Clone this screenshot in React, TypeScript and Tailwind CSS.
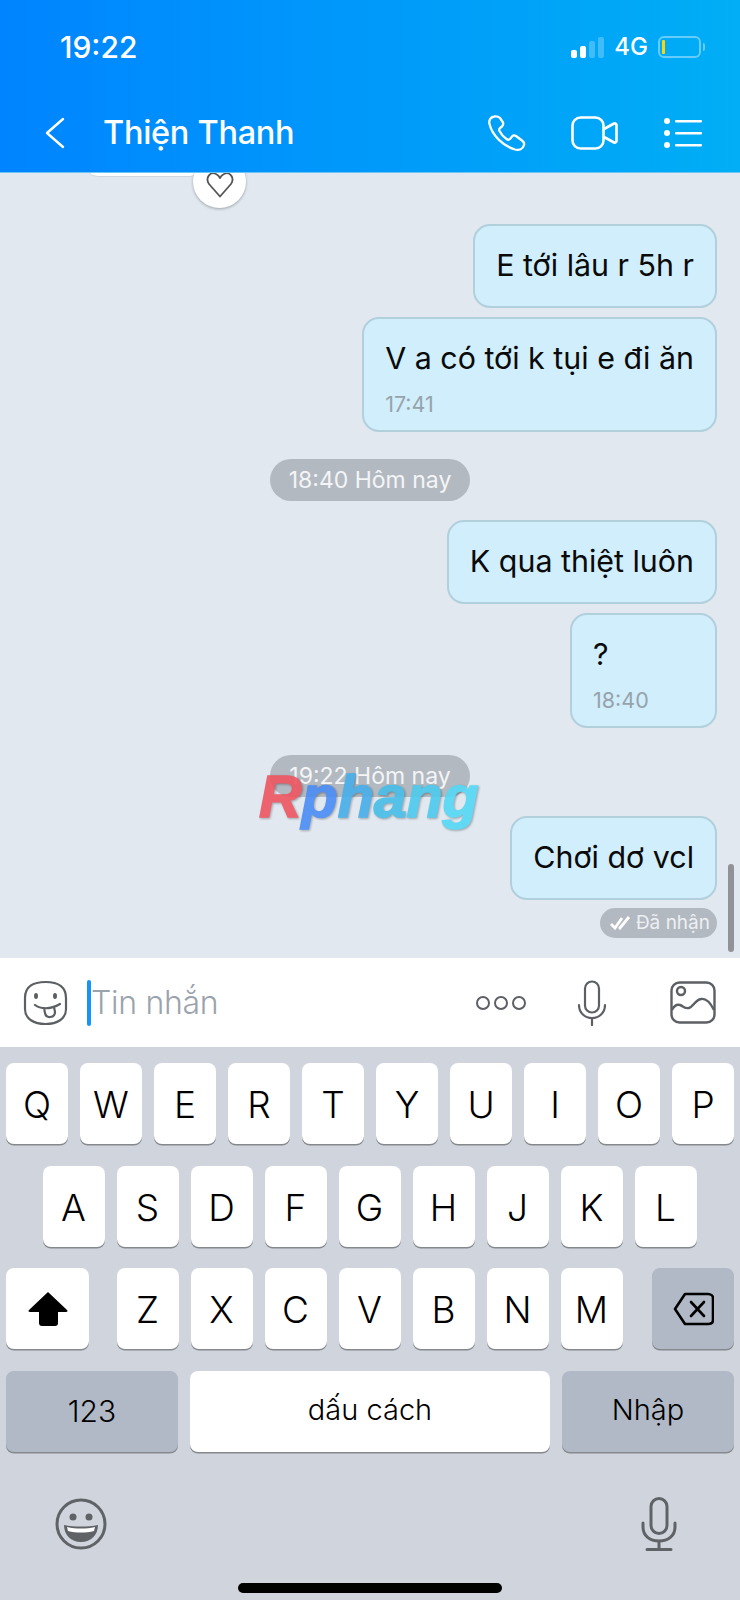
const font = { fontFamily: "Inter, 'Noto Sans', sans-serif" };

const row1 = ["Q", "W", "E", "R", "T", "Y", "U", "I", "O", "P"];
const row2 = ["A", "S", "D", "F", "G", "H", "J", "K", "L"];
const row3 = ["Z", "X", "C", "V", "B", "N", "M"];

function Key({ label }: { label: string }) {
  return (
    <div className="flex h-[81px] w-[62px] items-center justify-center rounded-[8px] bg-white pt-[2px] text-[37px] leading-none font-light text-black shadow-[0_1.5px_0_#85888d]">
      {label}
    </div>
  );
}

function Bubble({ text, time }: { text: string; time?: string }) {
  return (
    <div className={`rounded-[17px] border-2 border-[#b2cfdc] bg-[#d0eefc] px-[21px] pt-[19px] ${time ? "pb-[14px]" : "pb-[20px]"}`}>
      <div className="text-[30.4px] leading-[41px] whitespace-nowrap text-[#0a0a0a]">{text}</div>
      {time && <div className="mt-[13px] text-[21.5px] leading-[24px] text-[#97a3ab]">{time}</div>}
    </div>
  );
}

function TimePill({ text }: { text: string }) {
  return (
    <div className="flex h-[42px] w-[200px] items-center justify-center self-center rounded-full bg-[#b3b9c1] text-[23px] text-[#f3f5f7]">
      {text}
    </div>
  );
}

function StatusBar() {
  return (
    <div className="flex h-[94px] items-center pr-[35px] pl-[60px] text-white">
      <span className="text-[30px] font-medium">19:22</span>
      <div className="ml-auto flex items-center">
        <div className="flex h-[21px] items-end gap-[3px]">
          <span className="h-[8px] w-[6px] rounded-[2px] bg-white" />
          <span className="h-[12px] w-[6px] rounded-[2px] bg-white" />
          <span className="h-[17px] w-[6px] rounded-[2px] bg-white/25" />
          <span className="h-[21px] w-[6px] rounded-[2px] bg-white/25" />
        </div>
        <span className="ml-[10px] text-[24px] font-medium">4G</span>
        <div className="ml-[10px] flex h-[22px] w-[43px] items-center rounded-[6px] border-2 border-white/40 pl-[2px]">
          <span className="h-[14px] w-[3px] rounded-[1px] bg-[#ffd60a]" />
        </div>
        <span className="ml-[2px] h-[8px] w-[2px] rounded-r-full bg-white/40" />
      </div>
    </div>
  );
}

function NavBar() {
  return (
    <div className="flex h-[78px] items-center text-white">
      <svg className="ml-[45px] h-[32px] w-[20px]" viewBox="0 0 20 32" fill="none" stroke="currentColor" strokeWidth="2.4" strokeLinecap="round" strokeLinejoin="round">
        <path d="M18 2 2 16l16 14" />
      </svg>
      <span className="ml-[38px] text-[32.5px] font-medium tracking-[-0.3px]">Thiện Thanh</span>
      <div className="ml-auto flex items-center pr-[38px]">
        <svg className="h-[36px] w-[38px]" viewBox="0 0 38 36" fill="none" stroke="currentColor" strokeWidth="2.300" strokeLinejoin="round">
          <path d="M6 1.500C3 2 .5 5 1.500 9 4 20 15 31 27 34.500c4 1 8-.5 9-4.500.5-2 0-3-2-4.500L28 21c-1.500-1-3-1-4 .5L22 24c-1 1-2 1-3.500 0-3.500-2.500-5.500-5-7-8-.5-1-.5-2 .5-3l2-1.500c1.500-1.500 1.500-2.500 1-4L12 3c-1.500-1.500-3.500-2-6-1.500Z" />
        </svg>
        <svg className="ml-[45px] h-[34px] w-[47px]" viewBox="0 0 47 34" fill="none" stroke="currentColor" strokeWidth="2.600" strokeLinejoin="round">
          <rect x="1.5" y="1.5" width="31" height="31" rx="8" />
          <path d="M33 13 43 7.500c1.500-.5 2.500.5 2.500 1.500v16c0 1-1 2-2.500 1.500L33 21" />
        </svg>
        <svg className="ml-[46px] h-[30px] w-[38px]" viewBox="0 0 38 30" fill="currentColor">
          <circle cx="3" cy="3" r="3" />
          <circle cx="3" cy="15" r="3" />
          <circle cx="3" cy="27" r="3" />
          <rect x="11" y="2" width="27" height="2.400" rx="1" />
          <rect x="11" y="14" width="27" height="2.400" rx="1" />
          <rect x="11" y="26" width="27" height="2.400" rx="1" />
        </svg>
      </div>
    </div>
  );
}

function ChatArea() {
  return (
    <div className="relative flex h-[786px] flex-col items-end overflow-hidden bg-[#e1e8f0] pt-[52px] pr-[23px]">
      {/* bottom of the message above, mostly scrolled away */}
      <div className="absolute top-[-30px] left-[84px] h-[35px] w-[120px] rounded-[14px] border border-[#cfd6dc] bg-white" />
      <div className="absolute top-[-17px] left-[193px] flex h-[53px] w-[53px] items-center justify-center rounded-full bg-white shadow-[0_1px_3px_rgba(0,0,0,0.3)]">
        <svg className="mt-[7px] h-[26px] w-[28px]" viewBox="0 0 28 26" fill="none" stroke="#555" strokeWidth="1.800" strokeLinejoin="round">
          <path d="M14 24.500 3 12C-1 6 4-1 10 2c2 1 3 2 4 4 1-2 2-3 4-4 6-3 11 4 7 10Z" />
        </svg>
      </div>

      <Bubble text="E tới lâu r 5h r" />
      <div className="mt-[9px]">
        <Bubble text="V a có tới k tụi e đi ăn" time="17:41" />
      </div>
      <div className="mt-[27px] mb-[19px] flex w-full justify-center pl-[23px]">
        <TimePill text="18:40 Hôm nay" />
      </div>
      <Bubble text="K qua thiệt luôn" />
      <div className="mt-[9px] w-[147px]">
        <Bubble text="?" time="18:40" />
      </div>
      <div className="mt-[27px] mb-[19px] flex w-full justify-center pl-[23px]">
        <TimePill text="19:22 Hôm nay" />
      </div>
      <Bubble text="Chơi dơ vcl" />
      <div className="mt-[8px] flex h-[30px] items-center gap-[5px] rounded-full bg-[#b3b9c1] pr-[7px] pl-[10px] text-[19px] text-[#edf0f3]">
        <svg className="h-[14px] w-[21px]" viewBox="0 0 21 14" fill="none" stroke="#fff" strokeWidth="2.800">
          <path d="m1 8 4 4 7-10M9 11l1 1 9-11" />
        </svg>
        Đã nhận
      </div>

      {/* scrollbar */}
      <div className="absolute top-[692px] right-[6px] h-[88px] w-[6px] rounded-full bg-[#8f9397]" />

      {/* watermark */}
      <div
        className="absolute top-[590px] left-[259px] text-[59px] leading-[70px] font-bold italic opacity-90 drop-shadow-[1px_1.5px_1px_rgba(0,0,0,0.35)]"
        style={{ fontFamily: "'Liberation Sans', sans-serif" }}
      >
        <span className="text-[#ee5560] [-webkit-text-stroke:1.5px_#ee5560]">R</span>
        <span className="text-[#4a8df5] [-webkit-text-stroke:1.5px_#4a8df5]">p</span>
        <span className="text-[#47aeea] [-webkit-text-stroke:1.5px_#47aeea]">h</span>
        <span className="text-[#47bde8] [-webkit-text-stroke:1.5px_#47bde8]">a</span>
        <span className="text-[#4ccbee] [-webkit-text-stroke:1.5px_#4ccbee]">n</span>
        <span className="text-[#55d8f5] [-webkit-text-stroke:1.5px_#55d8f5]">g</span>
      </div>
    </div>
  );
}

function InputBar() {
  return (
    <div className="flex h-[89px] items-center bg-white">
      <svg className="ml-[23px] h-[46px] w-[45px]" viewBox="0 0 45 46" fill="none" stroke="#5c5f63" strokeWidth="2.200" strokeLinecap="round" strokeLinejoin="round">
        <path d="M22.500 2C34 2 43 6 43 18v11c0 10-9 15-20.500 15S2 39 2 29V18C2 6 11 2 22.500 2Z" />
        <ellipse cx="13" cy="16" rx="2" ry="3" fill="#5c5f63" stroke="none" />
        <ellipse cx="32" cy="16" rx="2" ry="3" fill="#5c5f63" stroke="none" />
        <path d="M12 25c5 4 15 5 25-1M21 28l1 5c1 6 10 5 10-1l-1-5" />
      </svg>
      <span className="ml-[19px] h-[46px] w-[4px] rounded-full bg-[#1694f8]" />
      <span className="text-[32px] font-light tracking-[-0.3px] text-[#9aa3ad]">Tin nhắn</span>
      <div className="ml-auto flex items-center pr-[24px]">
        <div className="flex gap-[4px]">
          <span className="h-[14px] w-[14px] rounded-full border-2 border-[#5c5f63]" />
          <span className="h-[14px] w-[14px] rounded-full border-2 border-[#5c5f63]" />
          <span className="h-[14px] w-[14px] rounded-full border-2 border-[#5c5f63]" />
        </div>
        <svg className="ml-[51px] h-[46px] w-[30px]" viewBox="0 0 30 46" fill="none" stroke="#5c5f63" strokeWidth="2.200" strokeLinecap="round">
          <rect x="8" y="1.500" width="14" height="31" rx="7" />
          <path d="M2 25c0 8 6 13 13 13s13-5 13-13M15 38v7" />
        </svg>
        <svg className="ml-[63px] h-[43px] w-[46px]" viewBox="0 0 46 43" fill="none" stroke="#5c5f63" strokeWidth="2.400" strokeLinejoin="round">
          <rect x="1.500" y="1.500" width="43" height="40" rx="8" />
          <circle cx="11" cy="10" r="4" />
          <path d="M2 29c2-4 5-6 8-5s5 4 9 3 6-8 12-9c5-1 10 5 13 11" />
        </svg>
      </div>
    </div>
  );
}

function Keyboard() {
  const sideKey =
    "flex items-center justify-center rounded-[8px] bg-[#b1b9c6] font-light text-black shadow-[0_1.5px_0_#85888d]";
  return (
    <div className="flex h-[553px] flex-col items-center bg-[#d0d4dc] px-[6px] pt-[16px]">
      <div className="flex gap-[12px]">
        {row1.map((k) => (
          <Key key={k} label={k} />
        ))}
      </div>
      <div className="mt-[22px] flex gap-[12px] pr-[1px]">
        {row2.map((k) => (
          <Key key={k} label={k} />
        ))}
      </div>
      <div className="mt-[21px] flex w-full justify-between">
        <div className="flex h-[81px] w-[83px] items-center justify-center rounded-[8px] bg-white shadow-[0_1.5px_0_#85888d]">
          <svg className="h-[36px] w-[40px]" viewBox="0 0 40 36" fill="#000">
            <path d="M20 1 39 19c1 1 .5 2-1 2h-8v11c0 2-1 3-3 3H14c-2 0-3-1-3-3V21H2c-1.500 0-2-1-1-2Z" />
          </svg>
        </div>
        <div className="flex gap-[12px] pr-[2px]">
          {row3.map((k) => (
            <Key key={k} label={k} />
          ))}
        </div>
        <div className={`${sideKey} h-[81px] w-[82px]`}>
          <svg className="h-[34px] w-[41px]" viewBox="0 0 41 34" fill="none" stroke="#000" strokeWidth="2.600" strokeLinecap="round" strokeLinejoin="round">
            <path d="M12 2h23c3 0 5 2 5 4v22c0 3-2 4-5 4H12L2 17Z" />
            <path d="m18 10 13 14M31 10 18 24" />
          </svg>
        </div>
      </div>
      <div className="mt-[22px] flex w-full gap-[12px]">
        <div className={`${sideKey} h-[81px] w-[172px] text-[30px]`}>123</div>
        <div className="flex h-[81px] w-[360px] items-center justify-center rounded-[8px] bg-white pb-[3px] text-[29px] font-light text-black shadow-[0_1.5px_0_#85888d]">
          dấu cách
        </div>
        <div className={`${sideKey} h-[81px] w-[172px] pb-[3px] text-[29px]`}>Nhập</div>
      </div>
      <div className="mt-[45px] flex w-full items-center justify-between pr-[56px] pl-[49px]">
        <svg className="h-[52px] w-[52px]" viewBox="0 0 52 52" fill="none">
          <circle cx="26" cy="26" r="24" stroke="#5f6368" strokeWidth="3" />
          <circle cx="18" cy="19" r="3.500" fill="#5f6368" />
          <circle cx="34" cy="19" r="3.500" fill="#5f6368" />
          <path d="M9 27c10 2 24 2 34 0 0 10-7 17-17 17S9 37 9 27Z" fill="#5f6368" />
          <path d="M12 29c9 2 19 2 28 0l-1 4c-8 2-18 2-26 0Z" fill="#fff" />
        </svg>
        <svg className="h-[54px] w-[38px]" viewBox="0 0 38 54" fill="none" stroke="#5f6368" strokeWidth="3" strokeLinecap="round">
          <rect x="11" y="1.500" width="16" height="35" rx="8" />
          <path d="M3 26v4c0 9 7 14 16 14s16-5 16-14v-4M19 44v8M7 52.500h24" />
        </svg>
      </div>
      <div className="mt-[32px] h-[10px] w-[264px] rounded-full bg-black" />
    </div>
  );
}

export default function App() {
  return (
    <div className="h-[1600px] w-[740px] overflow-hidden" style={font}>
      <div className="relative z-10 h-[172px] bg-gradient-to-r from-[#0084ff] to-[#02aef5] shadow-[0_1px_0_#6cc4f5]">
        <StatusBar />
        <NavBar />
      </div>
      <ChatArea />
      <InputBar />
      <Keyboard />
    </div>
  );
}
